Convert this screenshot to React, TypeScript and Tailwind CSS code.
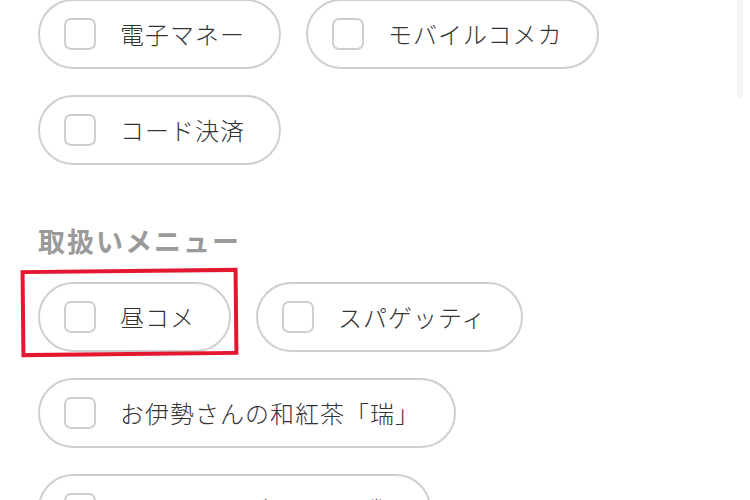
import React from "react";

const font = { fontFamily: '"Noto Sans CJK JP", "Noto Sans", sans-serif' };

function Pill({ label }: { label: string }) {
  return (
    <div className="flex h-[70px] items-center rounded-full border-2 border-[#cfcfcf] bg-white pl-[24px] pr-[34px]">
      <span className="h-[32px] w-[32px] shrink-0 rounded-[7px] border-2 border-[#cfcfcf] bg-white" />
      <span className="ml-[24px] whitespace-nowrap text-[24px] font-light leading-none tracking-[1px] text-[#333333]">
        {label}
      </span>
    </div>
  );
}

export default function App() {
  return (
    <div className="relative h-[500px] w-[750px] overflow-hidden bg-white" style={font}>
      <div className="absolute right-[7px] top-0 h-[98px] w-[6px] rounded-b-[3px] bg-[#f5f5f5]" />
      <div className="-mt-px pl-[38px]">
        <div className="flex flex-wrap gap-x-[25px] gap-y-[26px]">
          <Pill label="電子マネー" />
          <Pill label="モバイルコメカ" />
          <Pill label="コード決済" />
        </div>
        <h2 className="mt-[56px] text-[27px] font-bold leading-[40px] tracking-[2px] text-[#9a9a9a]">
          取扱いメニュー
        </h2>
        <div className="relative mt-[21px] flex flex-wrap gap-x-[25px] gap-y-[26px]">
          <div className="relative">
            <Pill label="昼コメ" />
            <div className="absolute left-[-17px] top-[-13px] h-[87px] w-[217px] -rotate-[0.6deg] border-[4px] border-[#e3172f]" />
          </div>
          <Pill label="スパゲッティ" />
          <Pill label="お伊勢さんの和紅茶「瑞」" />
          <Pill label="ホットドッグ＆サンド類" />
        </div>
      </div>
    </div>
  );
}
